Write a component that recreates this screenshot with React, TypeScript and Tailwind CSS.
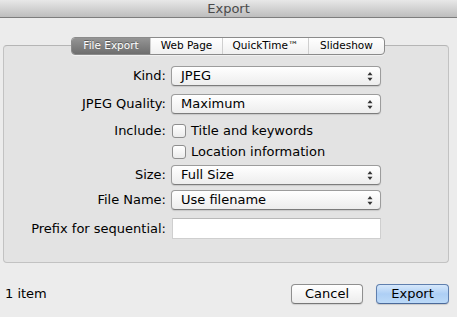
import React from "react";

const font = { fontFamily: '"Lucida Grande", "DejaVu Sans", sans-serif' };

function Arrows() {
  return (
    <svg width="6" height="11" viewBox="0 0 6 11" className="absolute right-[7px] top-[4px]">
      <path d="M3 1 L5.5 4.2 L0.5 4.2 Z" fill="#333" />
      <path d="M3 10 L5.5 6.8 L0.5 6.8 Z" fill="#333" />
    </svg>
  );
}

function Popup({ value }: { value: string }) {
  return (
    <div className="relative w-[210px] h-[20px] rounded-[4px] border border-[#9c9c9c] border-b-[#7c7c7c] bg-gradient-to-b from-white to-[#ededed] shadow-[0_1px_1px_rgba(0,0,0,0.12)] flex items-center pl-[9px] text-[13px] text-black">
      {value}
      <Arrows />
    </div>
  );
}

function Label({ children }: { children: React.ReactNode }) {
  return <div className="w-[162px] shrink-0 text-right text-[13px] text-black">{children}</div>;
}

function Box() {
  return <div className="w-[14px] h-[14px] rounded-[3px] border border-[#8e8e8e] bg-gradient-to-b from-white to-[#ebebeb]" />;
}

export default function App() {
  const tabs = ["File Export", "Web Page", "QuickTime™", "Slideshow"];
  const widths = ["w-[78px]", "w-[72px]", "w-[86px]", "w-[76px]"];
  return (
    <div style={font} className="w-[457px] h-[317px] bg-[#ececec] flex flex-col overflow-hidden">
      <div className="h-[18px] shrink-0 bg-gradient-to-b from-[#e8e8e8] to-[#bdbdbd] border-b border-[#7d7d7d] flex items-center justify-center text-[13px] text-[#4a4a4a] leading-none">
        Export
      </div>
      <div className="relative mx-[3px] mt-[27px] w-[446px] h-[218px] rounded-[4px] border border-[#c2c2c2] border-t-[#b5b5b5] bg-[#e3e3e3]">
        <div className="absolute left-[67px] -top-[9px] flex h-[18px] rounded-[4px] border border-[#8b8b8b] bg-gradient-to-b from-white to-[#f0f0f0] shadow-[0_1px_0_rgba(255,255,255,0.5)] overflow-hidden text-[10.5px]">
          {tabs.map((t, i) => (
            <div
              key={t}
              className={
                i === 0
                  ? `${widths[i]} flex items-center justify-center text-white bg-gradient-to-b from-[#959595] to-[#6e6e6e] [text-shadow:0_-1px_0_rgba(0,0,0,0.35)]`
                  : `${widths[i]} flex items-center justify-center text-black border-l border-[#cfcfcf]`
              }
            >
              {t}
            </div>
          ))}
        </div>
        <div className="flex flex-col pt-[20px]">
          <div className="flex items-center">
            <Label>Kind:</Label>
            <div className="ml-[5px]"><Popup value="JPEG" /></div>
          </div>
          <div className="flex items-center mt-[8px]">
            <Label>JPEG Quality:</Label>
            <div className="ml-[5px]"><Popup value="Maximum" /></div>
          </div>
          <div className="flex items-center h-[21px] mt-[6px]">
            <Label>Include:</Label>
            <div className="ml-[6px] flex items-center">
              <Box />
              <span className="ml-[5px] text-[13px] text-black">Title and keywords</span>
            </div>
          </div>
          <div className="flex items-center h-[21px]">
            <div className="w-[162px] shrink-0" />
            <div className="ml-[6px] flex items-center">
              <Box />
              <span className="ml-[5px] text-[13px] text-black">Location information</span>
            </div>
          </div>
          <div className="flex items-center mt-[3px]">
            <Label>Size:</Label>
            <div className="ml-[5px]"><Popup value="Full Size" /></div>
          </div>
          <div className="flex items-center mt-[5px]">
            <Label>File Name:</Label>
            <div className="ml-[5px]"><Popup value="Use filename" /></div>
          </div>
          <div className="flex items-center mt-[8px]">
            <Label>Prefix for sequential:</Label>
            <div className="ml-[6px] w-[209px] h-[21px] bg-white border border-[#cfcfcf] border-t-[#b9b9b9]" />
          </div>
        </div>
      </div>
      <div className="flex items-center mt-[21px] pl-[5px] pr-[8px] h-[20px]">
        <span className="text-[13px] text-black">1 item</span>
        <div className="ml-auto flex gap-[13px]">
          <div className="w-[72px] h-[20px] rounded-[4px] border border-[#8f8f8f] border-b-[#777] bg-gradient-to-b from-white to-[#ececec] shadow-[0_1px_1px_rgba(0,0,0,0.12)] flex items-center justify-center text-[13px] text-black">
            Cancel
          </div>
          <div className="w-[73px] h-[20px] rounded-[4px] border border-[#5f7fae] border-b-[#4b6a9a] bg-gradient-to-b from-[#d6e8fb] via-[#aecff5] to-[#bcdaf8] shadow-[0_1px_1px_rgba(0,0,0,0.15)] flex items-center justify-center text-[13px] text-black">
            Export
          </div>
        </div>
      </div>
    </div>
  );
}
